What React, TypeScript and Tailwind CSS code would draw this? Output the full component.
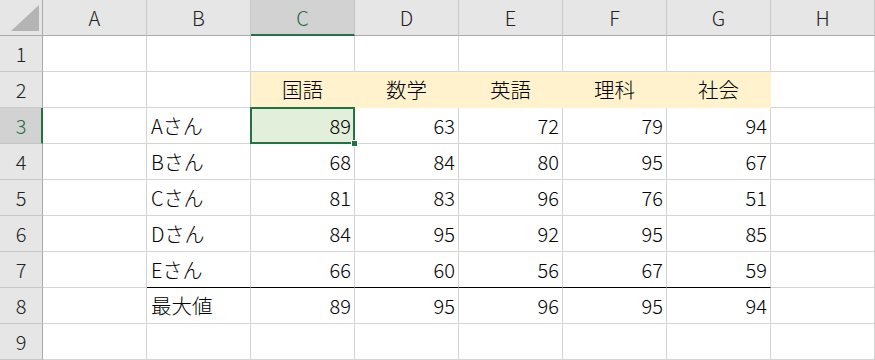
import React from "react"

const cols = ["A", "B", "C", "D", "E", "F", "G", "H"]
const subjects = ["国語", "数学", "英語", "理科", "社会"]

const students: { name: string; scores: number[] }[] = [
  { name: "Aさん", scores: [89, 63, 72, 79, 94] },
  { name: "Bさん", scores: [68, 84, 80, 95, 67] },
  { name: "Cさん", scores: [81, 83, 96, 76, 51] },
  { name: "Dさん", scores: [84, 95, 92, 95, 85] },
  { name: "Eさん", scores: [66, 60, 56, 67, 59] },
]
const maxRow = [89, 95, 96, 95, 94]

const font = { fontFamily: '"Noto Sans CJK JP", "Noto Sans", sans-serif' }

function ColHeader({ label }: { label: string }) {
  const selected = label === "C"
  return (
    <div
      className={`flex items-center justify-center border-r border-b text-[20px] ${
        selected
          ? "bg-[#d2d2d2] border-r-[#c4c4c4] border-b-2 border-b-[#217346] text-[#1e6b40] pt-[1px]"
          : "bg-[#e6e6e6] border-r-[#c8c8c8] border-b-[#ababab] text-[#222]"
      }`}>
      {label}
    </div>
  )
}

function RowHeader({ n }: { n: number }) {
  const selected = n === 3
  return (
    <div
      className={`flex items-center justify-center border-b text-[20px] ${
        selected
          ? "bg-[#d2d2d2] border-r-2 border-r-[#217346] border-b-[#c4c4c4] text-[#1e6b40] pl-[1px]"
          : "bg-[#e6e6e6] border-r border-r-[#ababab] border-b-[#c8c8c8] text-[#222]"
      }`}>
      {n}
    </div>
  )
}

function Cell({
  children,
  align = "left",
  fill,
  underline,
  active,
}: {
  children?: React.ReactNode
  align?: "left" | "right" | "center"
  fill?: boolean
  underline?: boolean
  active?: boolean
}) {
  return (
    <div
      className={`relative flex items-center border-r border-b text-[20px] text-black ${
        align === "right" ? "justify-end pr-[3px]" : align === "center" ? "justify-center" : "justify-start pl-[4px]"
      } ${fill ? "bg-[#fff2cc] border-[#fff2cc]" : active ? "bg-[#e2efda] border-[#d4d4d4]" : "bg-white border-[#d4d4d4]"} ${
        underline ? "border-b-black" : ""
      }`}>
      {children}
      {active && (
        <>
          <div className="pointer-events-none absolute -left-[1px] -top-[1px] -right-[1px] -bottom-[1px] z-10 border-2 border-[#217346]" />
          <div className="absolute -right-[4px] -bottom-[4px] z-20 h-[7px] w-[7px] border border-white bg-[#217346]" />
        </>
      )}
    </div>
  )
}

export default function App() {
  const rows: React.ReactNode[][] = []
  for (let r = 1; r <= 9; r++) {
    const cells: React.ReactNode[] = []
    cols.forEach((c, ci) => {
      const key = `${c}${r}`
      const dataIdx = ci - 2 // C..G => 0..4
      const inData = dataIdx >= 0 && dataIdx <= 4
      const underline = r === 7 && ci >= 1 && ci <= 6
      if (r === 2 && inData) {
        cells.push(
          <Cell key={key} fill align="center">
            <span className="text-[20.5px]">{subjects[dataIdx]}</span>
          </Cell>,
        )
      } else if (r >= 3 && r <= 7 && c === "B") {
        cells.push(
          <Cell key={key} underline={underline}>
            {students[r - 3].name}
          </Cell>,
        )
      } else if (r >= 3 && r <= 7 && inData) {
        cells.push(
          <Cell key={key} align="right" underline={underline} active={r === 3 && c === "C"}>
            {students[r - 3].scores[dataIdx]}
          </Cell>,
        )
      } else if (r === 8 && c === "B") {
        cells.push(
          <Cell key={key}>
            <span className="text-[20.5px]">最大値</span>
          </Cell>,
        )
      } else if (r === 8 && inData) {
        cells.push(
          <Cell key={key} align="right">
            {maxRow[dataIdx]}
          </Cell>,
        )
      } else {
        cells.push(<Cell key={key} underline={underline} />)
      }
    })
    rows.push(cells)
  }

  return (
    <div className="h-[360px] w-[875px] overflow-hidden bg-white font-light" style={font}>
      <div className="grid grid-cols-[43px_repeat(7,104px)_1fr] grid-rows-[36px_repeat(9,36px)]">
        {/* corner */}
        <div className="flex items-end justify-end border-r border-b border-r-[#ababab] border-b-[#ababab] bg-[#e6e6e6] pr-[3px] pb-[4px]">
          <svg width="28" height="26" viewBox="0 0 28 26">
            <polygon points="28,0 28,26 0,26" fill="#b4b4b4" />
          </svg>
        </div>
        {cols.map(c => (
          <ColHeader key={c} label={c} />
        ))}
        {rows.map((cells, i) => (
          <React.Fragment key={i}>
            <RowHeader n={i + 1} />
            {cells}
          </React.Fragment>
        ))}
      </div>
    </div>
  )
}
